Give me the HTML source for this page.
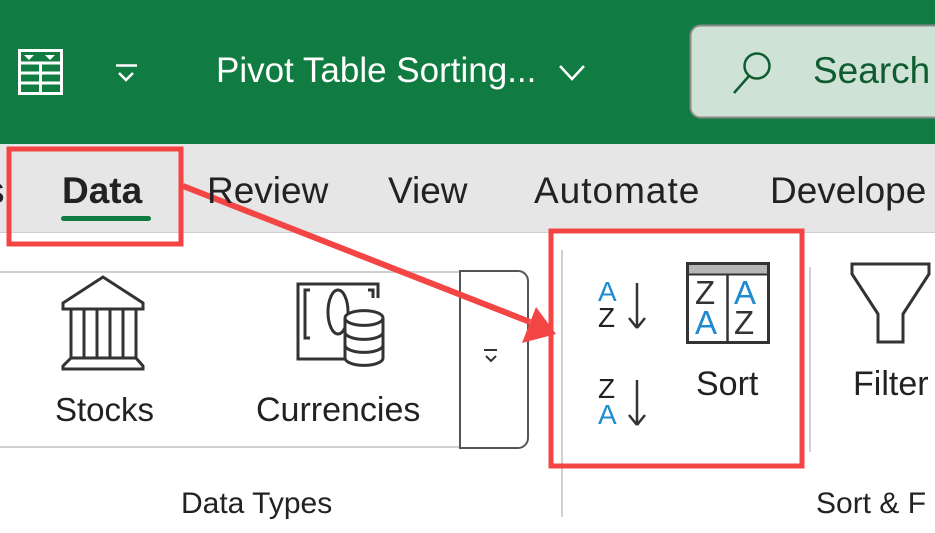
<!DOCTYPE html>
<html><head><meta charset="utf-8"><style>
*{margin:0;padding:0;box-sizing:border-box}
body{width:935px;height:533px;overflow:hidden;background:#fff;font-family:"Liberation Sans",sans-serif;position:relative}
.a{position:absolute;white-space:nowrap}
</style></head><body>
<div class="a" style="left:0;top:0;width:935px;height:144px;background:#107c41"></div>
<div class="a" style="left:0;top:144px;width:935px;height:89px;background:#e6e6e6"></div>
<div class="a" style="left:0;top:232px;width:935px;height:1px;background:#d0d0d0"></div>
<svg class="a" style="left:0;top:0" width="935" height="533">
<g fill="none" stroke="#fff" stroke-width="3">
<rect x="19.5" y="50.5" width="42" height="43"/>
<line x1="19" y1="63" x2="62" y2="63"/><line x1="19" y1="73" x2="62" y2="73"/><line x1="19" y1="83" x2="62" y2="83"/>
<line x1="40.5" y1="63" x2="40.5" y2="94"/>
</g>
<path d="M24 55h10l-5 5zM45 55h10l-5 5z" fill="#fff"/>
<line x1="116" y1="65.5" x2="137" y2="65.5" stroke="#fff" stroke-width="2.5"/>
<path d="M119 73l7 7 7-7" fill="none" stroke="#fff" stroke-width="2.5"/>
<path d="M560 66l12 13 12-13" fill="none" stroke="#fff" stroke-width="2.5"/>
<rect x="690.5" y="25.5" width="260" height="92" rx="10" fill="#cfe2d6" stroke="#8a8a8a" stroke-width="2"/>
<circle cx="757" cy="66" r="12.5" fill="none" stroke="#0e5c2f" stroke-width="2.5"/>
<line x1="749" y1="76" x2="734" y2="93" stroke="#0e5c2f" stroke-width="2.5"/>
<rect x="61" y="216" width="90" height="5" rx="2.5" fill="#107c41"/>
<line x1="0" y1="272" x2="460" y2="272" stroke="#cfcfcf" stroke-width="2"/>
<line x1="0" y1="447" x2="460" y2="447" stroke="#cfcfcf" stroke-width="2"/>
<path d="M460 271h58a10 10 0 0 1 10 10v157a10 10 0 0 1-10 10h-58z" fill="#fff" stroke="#555" stroke-width="2"/>
<line x1="484" y1="350" x2="497" y2="350" stroke="#333" stroke-width="2"/>
<path d="M486 356l5 5 5-5" fill="none" stroke="#333" stroke-width="2"/>
<g fill="none" stroke="#333" stroke-width="3">
<path d="M63 303l40-26 40 26v6H63z"/>
<path d="M71 310v48M84 310v48M97 310v48M110 310v48M123 310v48M136 310v48"/>
<path d="M71 358h65l7 8v3H63v-3z"/>
</g>
<g fill="none" stroke="#333" stroke-width="3">
<path d="M345 359H298V284h80v14"/>
<path d="M310 290h-5v48h5M368 290h5v8"/>
<ellipse cx="338" cy="312" rx="10" ry="22"/>
<path d="M345 318a18 7 0 0 1 38 0v40a18 7 0 0 1-38 0z" fill="#fff"/>
<path d="M345 318a18 7 0 0 0 38 0M345 332a18 7 0 0 0 38 0M345 345a18 7 0 0 0 38 0"/>
</g>
<line x1="562" y1="250" x2="562" y2="517" stroke="#d0d0d0" stroke-width="2"/>
<line x1="810" y1="267" x2="810" y2="452" stroke="#d0d0d0" stroke-width="2"/>
<path d="M637 326V283M637 328l-8-10M637 328l8-10" fill="none" stroke="#333" stroke-width="2.5"/>
<path d="M637 423V380M637 425l-8-10M637 425l8-10" fill="none" stroke="#333" stroke-width="2.5"/>
<rect x="687.5" y="263.5" width="81" height="79" fill="#fff" stroke="#333" stroke-width="3"/>
<rect x="689" y="265" width="78" height="9" fill="#b5b5b5"/>
<line x1="687" y1="274.5" x2="769" y2="274.5" stroke="#333" stroke-width="2"/>
<line x1="727.5" y1="274" x2="727.5" y2="342" stroke="#333" stroke-width="2.5"/>
<path d="M852 264h77v10l-26 40v28h-25v-28l-26-40z" fill="#fff" stroke="#333" stroke-width="3"/>
<rect x="9" y="149" width="172" height="95" fill="none" stroke="#f44545" stroke-width="5"/>
<rect x="551" y="231" width="251" height="235" fill="none" stroke="#f44545" stroke-width="5"/>
<line x1="183" y1="186" x2="530" y2="322" stroke="#f44545" stroke-width="6"/>
<path d="M556 334l-34 9 14-36z" fill="#f44545"/>
</svg>
<div class="a" style="left:216px;top:51px;font-size:35px;color:#fff">Pivot Table Sorting...</div>
<div class="a" style="left:813px;top:50px;font-size:37px;color:#0e5c2f">Search</div>
<div class="a" style="left:-14px;top:170px;font-size:37px;color:#222">s</div>
<div class="a" style="left:62px;top:170px;font-size:37px;color:#222;font-weight:bold">Data</div>
<div class="a" style="left:207px;top:170px;font-size:37px;color:#222">Review</div>
<div class="a" style="left:388px;top:170px;font-size:37px;color:#222">View</div>
<div class="a" style="left:534px;top:170px;font-size:37px;color:#222;letter-spacing:1px">Automate</div>
<div class="a" style="left:770px;top:170px;font-size:37px;color:#222">Develope</div>
<div class="a" style="left:55px;top:391px;font-size:33px;color:#222">Stocks</div>
<div class="a" style="left:256px;top:391px;font-size:34px;color:#222">Currencies</div>
<div class="a" style="left:181px;top:487px;font-size:30px;color:#222">Data Types</div>
<div class="a" style="left:816px;top:487px;font-size:30px;color:#222">Sort &amp; F</div>
<div class="a" style="left:696px;top:365px;font-size:34px;color:#222">Sort</div>
<div class="a" style="left:853px;top:365px;font-size:34px;color:#222">Filter</div>
<div class="a" style="left:598px;top:279px;font-size:28px;line-height:25px;color:#1e8ad0">A</div>
<div class="a" style="left:598px;top:305px;font-size:28px;line-height:25px;color:#222">Z</div>
<div class="a" style="left:598px;top:376px;font-size:28px;line-height:25px;color:#222">Z</div>
<div class="a" style="left:598px;top:402px;font-size:28px;line-height:25px;color:#1e8ad0">A</div>
<div class="a" style="left:695px;top:278px;font-size:33px;line-height:30px;color:#333">Z<br><span style="color:#1e8ad0">A</span></div>
<div class="a" style="left:734px;top:278px;font-size:33px;line-height:30px;color:#1e8ad0">A<br><span style="color:#333">Z</span></div>
</body></html>
